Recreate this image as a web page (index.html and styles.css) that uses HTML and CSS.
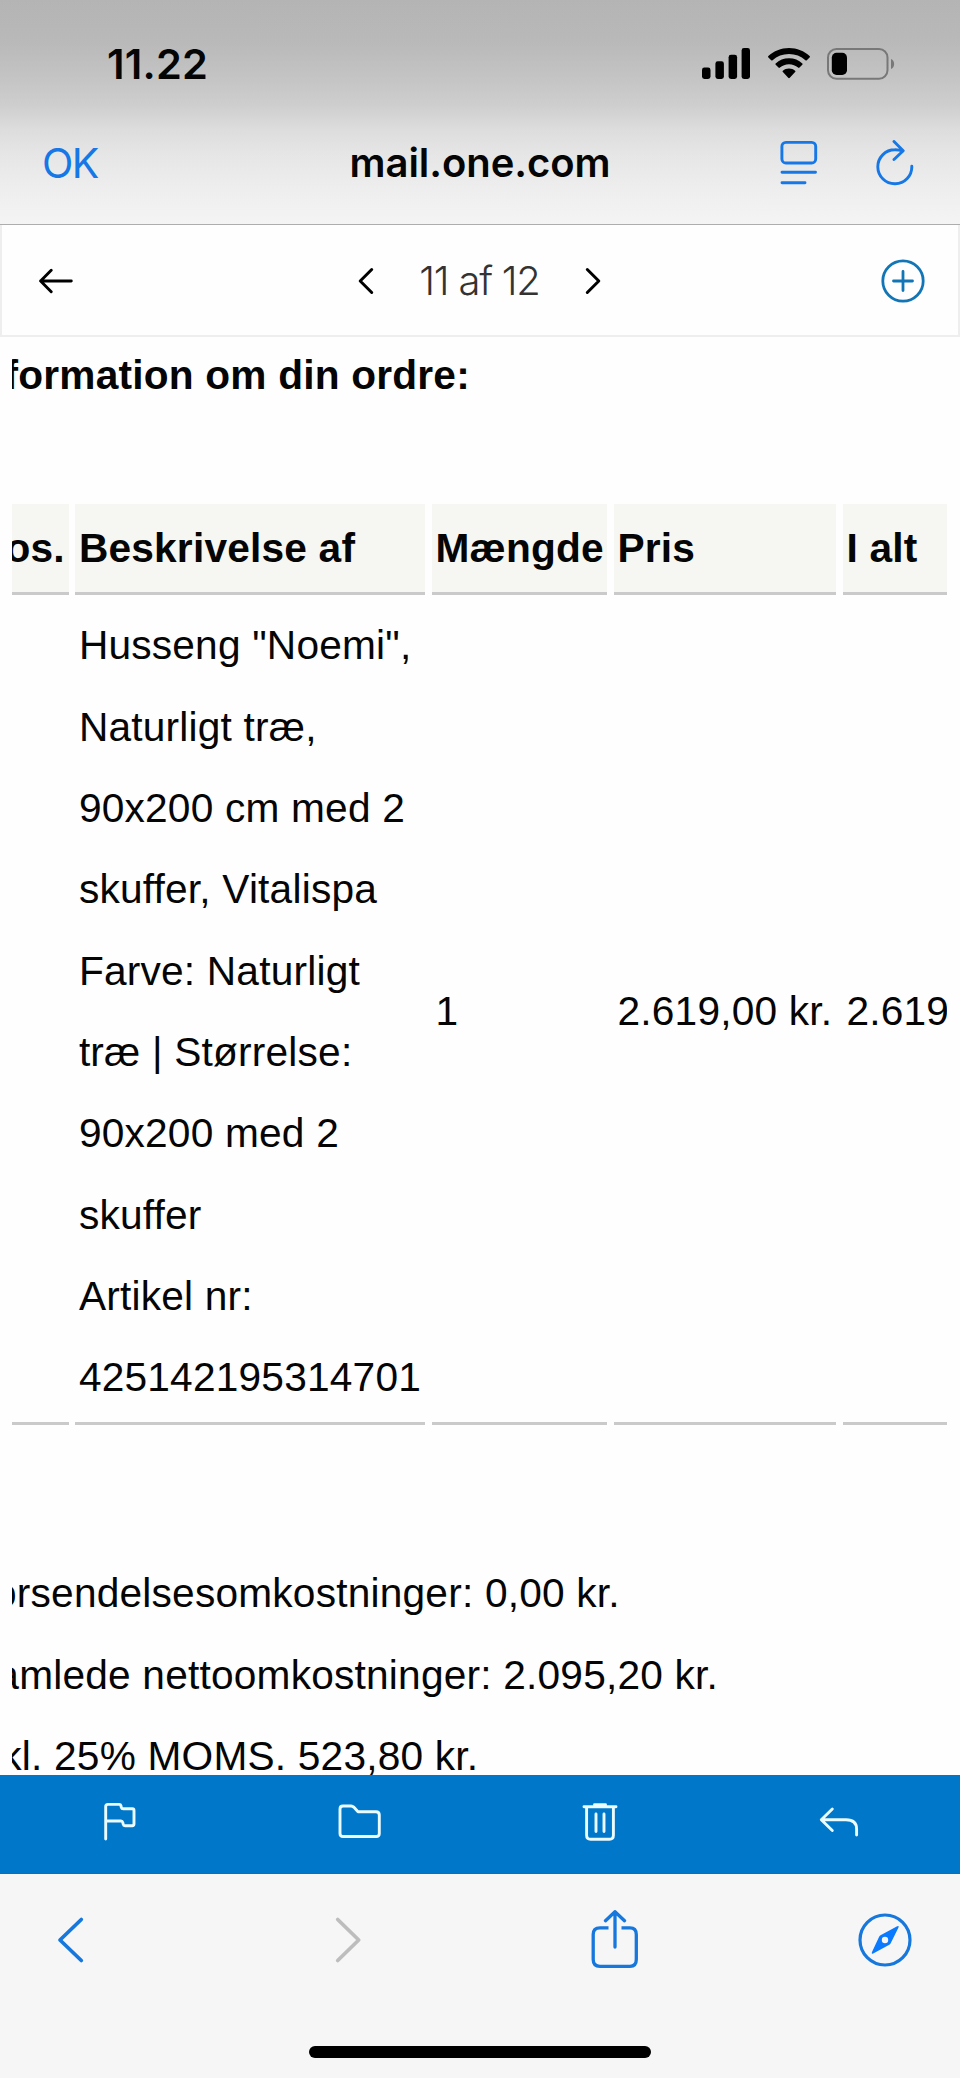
FILE: index.html
```html
<!DOCTYPE html>
<html lang="da">
<head>
<meta charset="utf-8">
<title>mail.one.com</title>
<link rel="stylesheet" href="styles.css">
</head>
<body>
<div class="phone">
  <header class="chrome">
    <div class="status">
      <span class="time">11.22</span>
      <div class="status-icons">
        <svg width="48" height="31" viewBox="0 0 48 31"><rect x="0" y="19.5" width="8.5" height="11.5" rx="2.4"/><rect x="13.4" y="13.3" width="8.5" height="17.7" rx="2.4"/><rect x="26.6" y="6.8" width="8.5" height="24.2" rx="2.4"/><rect x="39.6" y="0" width="8.4" height="31" rx="2.4"/></svg>
        <svg class="wifi" width="42" height="31" viewBox="0 0 42 31"><path d="M21 0C13 0 5.700 3 .4 8Q-.3 8.700 .4 9.400L3.200 12.200Q3.900 12.800 4.600 12.200C9 8.200 14.700 6 21 6S33 8.200 37.400 12.200Q38.100 12.800 38.800 12.200L41.600 9.400Q42.300 8.700 41.600 8C36.300 3 29 0 21 0ZM21 10.300C15.800 10.300 11.200 12.200 7.700 15.400Q7 16.100 7.700 16.800L10.500 19.600Q11.200 20.200 11.900 19.600C14.300 17.500 17.500 16.200 21 16.200S27.700 17.500 30.100 19.600Q30.800 20.200 31.500 19.600L34.300 16.800Q35 16.100 34.300 15.400C30.800 12.200 26.200 10.300 21 10.300ZM21 20.600C18.600 20.600 16.500 21.400 14.900 22.700Q14.200 23.400 14.900 24.100L20.200 29.800Q21 30.600 21.800 29.800L27.100 24.100Q27.800 23.400 27.100 22.700C25.500 21.400 23.400 20.600 21 20.600Z"/></svg>
        <svg class="battery" width="68" height="32" viewBox="0 0 68 32"><rect x="1" y="1" width="59.500" height="29.800" rx="8.500" fill="none" stroke="#787878" stroke-width="2"/><rect x="4.800" y="4.800" width="15.200" height="22.200" rx="4.800"/><path d="M64 11c4.200 1.800 4.200 8.200 0 10z" fill="#787878"/></svg>
      </div>
    </div>
    <div class="nav">
      <span class="ok">OK</span>
      <span class="host">mail.one.com</span>
      <div class="nav-icons">
        <svg width="38" height="46" viewBox="0 0 38 46" fill="none" stroke="#1677e6" stroke-width="2.900" stroke-linecap="round"><rect x="1.900" y="2.400" width="33.800" height="20.600" rx="4"/><path d="M2 32.300H35.500M2 42.800H25"/></svg>
        <svg class="reload" width="38" height="46" viewBox="0 0 38 46" fill="none" stroke="#1677e6" stroke-width="2.900" stroke-linecap="round" stroke-linejoin="round"><path d="M35.800 26.200A17 17 0 1 1 18.800 9.800Q23 9.700 26.800 11.200M18 1.500L27.200 10.700L18 19.500"/></svg>
      </div>
    </div>
  </header>

  <div class="toolbar">
    <svg width="34" height="26" viewBox="0 0 34 26" fill="none" stroke="#000" stroke-width="2.900" stroke-linecap="round" stroke-linejoin="round"><path d="M32.300 13H1.600M12.200 2.200L1.600 13L12.200 23.800"/></svg>
    <div class="pager">
      <svg width="16" height="28" viewBox="0 0 16 28" fill="none" stroke="#000" stroke-width="3" stroke-linecap="round" stroke-linejoin="round"><path d="M13.700 2.500L2.200 14L13.700 25.500"/></svg>
      <span class="count">11 af 12</span>
      <svg width="16" height="28" viewBox="0 0 16 28" fill="none" stroke="#000" stroke-width="3" stroke-linecap="round" stroke-linejoin="round"><path d="M2.300 2.500L13.800 14L2.300 25.500"/></svg>
    </div>
    <svg width="44" height="44" viewBox="0 0 44 44" fill="none" stroke="#1275b5" stroke-width="2.800" stroke-linecap="round"><circle cx="22" cy="22" r="20.200"/><path d="M12.500 22H31.500M22 12.500V31.500"/></svg>
  </div>

  <main class="message">
    <div class="body">
      <p class="heading">Information om din ordre:</p>
      <div class="order">
        <div class="cell head">Pos.</div>
        <div class="cell head">Beskrivelse af</div>
        <div class="cell head">Mængde</div>
        <div class="cell head">Pris</div>
        <div class="cell head">I alt</div>
        <div class="cell"></div>
        <div class="cell">Husseng "Noemi",<br>Naturligt træ,<br>90x200 cm med 2<br>skuffer, Vitalispa<br>Farve: Naturligt<br>træ | Størrelse:<br>90x200 med 2<br>skuffer<br>Artikel nr:<br>425142195314701</div>
        <div class="cell">1</div>
        <div class="cell">2.619,00 kr.</div>
        <div class="cell">2.619</div>
      </div>
      <div class="totals">
        <p>Forsendelsesomkostninger: 0,00 kr.</p>
        <p>Samlede nettoomkostninger: 2.095,20 kr.</p>
        <p class="vat">Inkl. 25% MOMS. 523,80 kr.</p>
      </div>
    </div>
  </main>

  <div class="actions">
    <svg width="34" height="40" viewBox="0 0 34 40" fill="none" stroke="#eafcff" stroke-width="2.900" stroke-linecap="round" stroke-linejoin="round"><path d="M2.700 37V4.600Q2.700 2.400 4.900 2.400H16.300Q17.600 2.400 17.900 3.700L18.300 5.300Q18.700 6.800 20.200 6.800H29.300Q31 6.800 31 8.500V21.800Q31 23.700 29.200 23.700H22Q20.500 23.700 20.200 22.300L19.800 20.500Q19.400 19 18 19H2.700"/></svg>
    <svg width="44" height="40" viewBox="0 0 44 40" fill="none" stroke="#eafcff" stroke-width="2.900" stroke-linejoin="round"><path d="M5 4H13Q14.600 4 15.700 5.100L20 9.700H38Q41.300 9.700 41.300 13V31.500Q41.300 34.500 38.300 34.500H5Q2 34.500 2 31.500V7Q2 4 5 4Z"/></svg>
    <svg width="36" height="40" viewBox="0 0 36 40" fill="none" stroke="#eafcff" stroke-width="2.900" stroke-linecap="round" stroke-linejoin="round"><path d="M2 4.700H34M12.500 2.800H23.500M4.600 5V33.200Q4.600 37.200 8.600 37.200H27.400Q31.400 37.200 31.400 33.200V5M14 12V29.500M22 12V29.500"/></svg>
    <svg width="40" height="40" viewBox="0 0 40 40" fill="none" stroke="#eafcff" stroke-width="2.900" stroke-linecap="round" stroke-linejoin="round"><path d="M13.300 7L2.300 17.800L13.300 28.500M2.500 17.800H27Q37.600 17.800 37.600 27V33"/></svg>
  </div>

  <footer class="browser">
    <div class="browser-icons">
      <svg width="28" height="60" viewBox="0 0 28 60" fill="none" stroke="#1677dc" stroke-width="3.700" stroke-linecap="round" stroke-linejoin="round"><path d="M24.300 9.500L3 30L24.300 50.500"/></svg>
      <svg class="forward" width="28" height="60" viewBox="0 0 28 60" fill="none" stroke="#bdbdbd" stroke-width="3.700" stroke-linecap="round" stroke-linejoin="round"><path d="M3.700 9.500L24.700 30L3.700 50.500"/></svg>
      <svg class="share" width="48" height="60" viewBox="0 0 48 60" fill="none" stroke="#1677dc" stroke-width="3.300" stroke-linecap="round" stroke-linejoin="round"><path stroke-linecap="butt" d="M17.500 17.800H9Q2.200 17.800 2.200 24.500V49.500Q2.200 56.300 9 56.300H39Q45.300 56.300 45.300 49.500V24.500Q45.300 17.800 39 17.800H30.500"/><path d="M24 37V2M14.500 10.700L24 1.700L33.500 10.700"/></svg>
      <svg class="compass" width="54" height="60" viewBox="0 0 54 60"><circle cx="27" cy="30" r="25" fill="none" stroke="#1677dc" stroke-width="3.200"/><path fill="#0a7aff" fill-rule="evenodd" d="M39.200 16.300Q41.300 15.500 40.500 17.500L32.800 33Q32.300 34 31.300 34.800L15.200 43.500Q13.200 44.300 13.900 42.300L21 27Q21.500 26 22.500 25.300ZM27 26.800A3.200 3.200 0 1 0 27 33.200A3.200 3.200 0 1 0 27 26.800Z"/></svg>
    </div>
    <div class="home"></div>
  </footer>
</div>
</body>
</html>
```
FILE: styles.css
```css
* { box-sizing: border-box; }
body { margin: 0; background: #fff; }
p { margin: 0; }
svg { display: block; flex: none; }

.phone {
  width: 960px;
  height: 2078px;
  display: flex;
  flex-direction: column;
  overflow: hidden;
  background: #fefefe;
  color: #050505;
}

.chrome {
  height: 225px;
  flex: none;
  border-bottom: 1px solid #adadad;
  background: linear-gradient(#b4b4b4 0, #b9b9b9 42px, #c4c4c4 78px, #cecece 105px, #dddddd 130px, #e6e6e6 155px, #eeeeee 190px, #f4f4f4 224px);
  font-family: Inter, "Liberation Sans", sans-serif;
}
.status {
  height: 110px;
  padding: 40px 65px 0 107px;
  display: flex;
  justify-content: space-between;
  align-items: flex-start;
}
.time { font-size: 41.500px; line-height: 48px; font-weight: 600; letter-spacing: 0.2px; }
.status-icons { display: flex; padding-top: 8px; }
.wifi { margin-left: 18px; }
.battery { margin: -0.500px 0 0 17px; }
.nav {
  height: 114px;
  padding: 0 46px 8px 42px;
  display: grid;
  grid-template-columns: 1fr auto 1fr;
  align-items: center;
}
.ok { color: #1677e6; font-size: 41px; line-height: 48px; letter-spacing: -1.500px; }
.host { margin-left: 4px; font-size: 40px; line-height: 48px; font-weight: 600; letter-spacing: -0.050px; }
.nav-icons { display: flex; justify-content: flex-end; gap: 58px; }

.toolbar {
  height: 112px;
  flex: none;
  border: 2px solid #eee;
  border-top: 0;
  padding: 1px 33px 0 37px;
  display: grid;
  grid-template-columns: 1fr auto 1fr;
  align-items: center;
}
.toolbar > :last-child { justify-self: end; }
.pager { display: flex; align-items: center; gap: 45px; margin-left: -5px; }
.count {
  font-family: Inter, sans-serif;
  font-weight: 300;
  font-size: 40px;
  line-height: 48px;
  letter-spacing: -1.200px;
  color: #333;
  white-space: nowrap;
}

.message {
  flex: 1;
  min-height: 0;
  margin: 0 13.300px 0 12px;
  overflow: hidden;
}
.body {
  margin-left: -44px;
  width: 1200px;
  font: 40.670px/81.330px "Liberation Sans", Arial, sans-serif;
  letter-spacing: 0.200px;
}
.heading { font-weight: 700; margin-top: -2px; }
.order {
  display: grid;
  grid-template-columns: 93.900px 349.800px 175.200px 222.200px 300px;
  gap: 6.800px;
  margin: 88px 0 0 6.800px;
}
.cell {
  display: flex;
  align-items: center;
  padding: 3.300px 3.400px;
  border-bottom: 3.400px solid #cacaca;
  white-space: nowrap;
}
.head { font-weight: 700; background: #f6f6f3; }
.totals { margin: 128.500px 0 0 1px; white-space: nowrap; }
.vat { margin-left: -2px; }

.actions {
  height: 99px;
  flex: none;
  padding: 0 101px 5px 103px;
  border-bottom: 1px solid #1b6ca6;
  background: #0077c8;
  display: flex;
  justify-content: space-between;
  align-items: center;
}
.browser { height: 204px; flex: none; background: #f6f6f6; }
.browser-icons {
  height: 172px;
  padding: 36px 0 0 57px;
  display: flex;
}
.forward { margin-left: 249px; }
.share { margin-left: 229px; }
.compass { margin-left: 219px; }
.home { width: 342px; height: 12px; border-radius: 6px; background: #000; margin: 0 auto; }
```
